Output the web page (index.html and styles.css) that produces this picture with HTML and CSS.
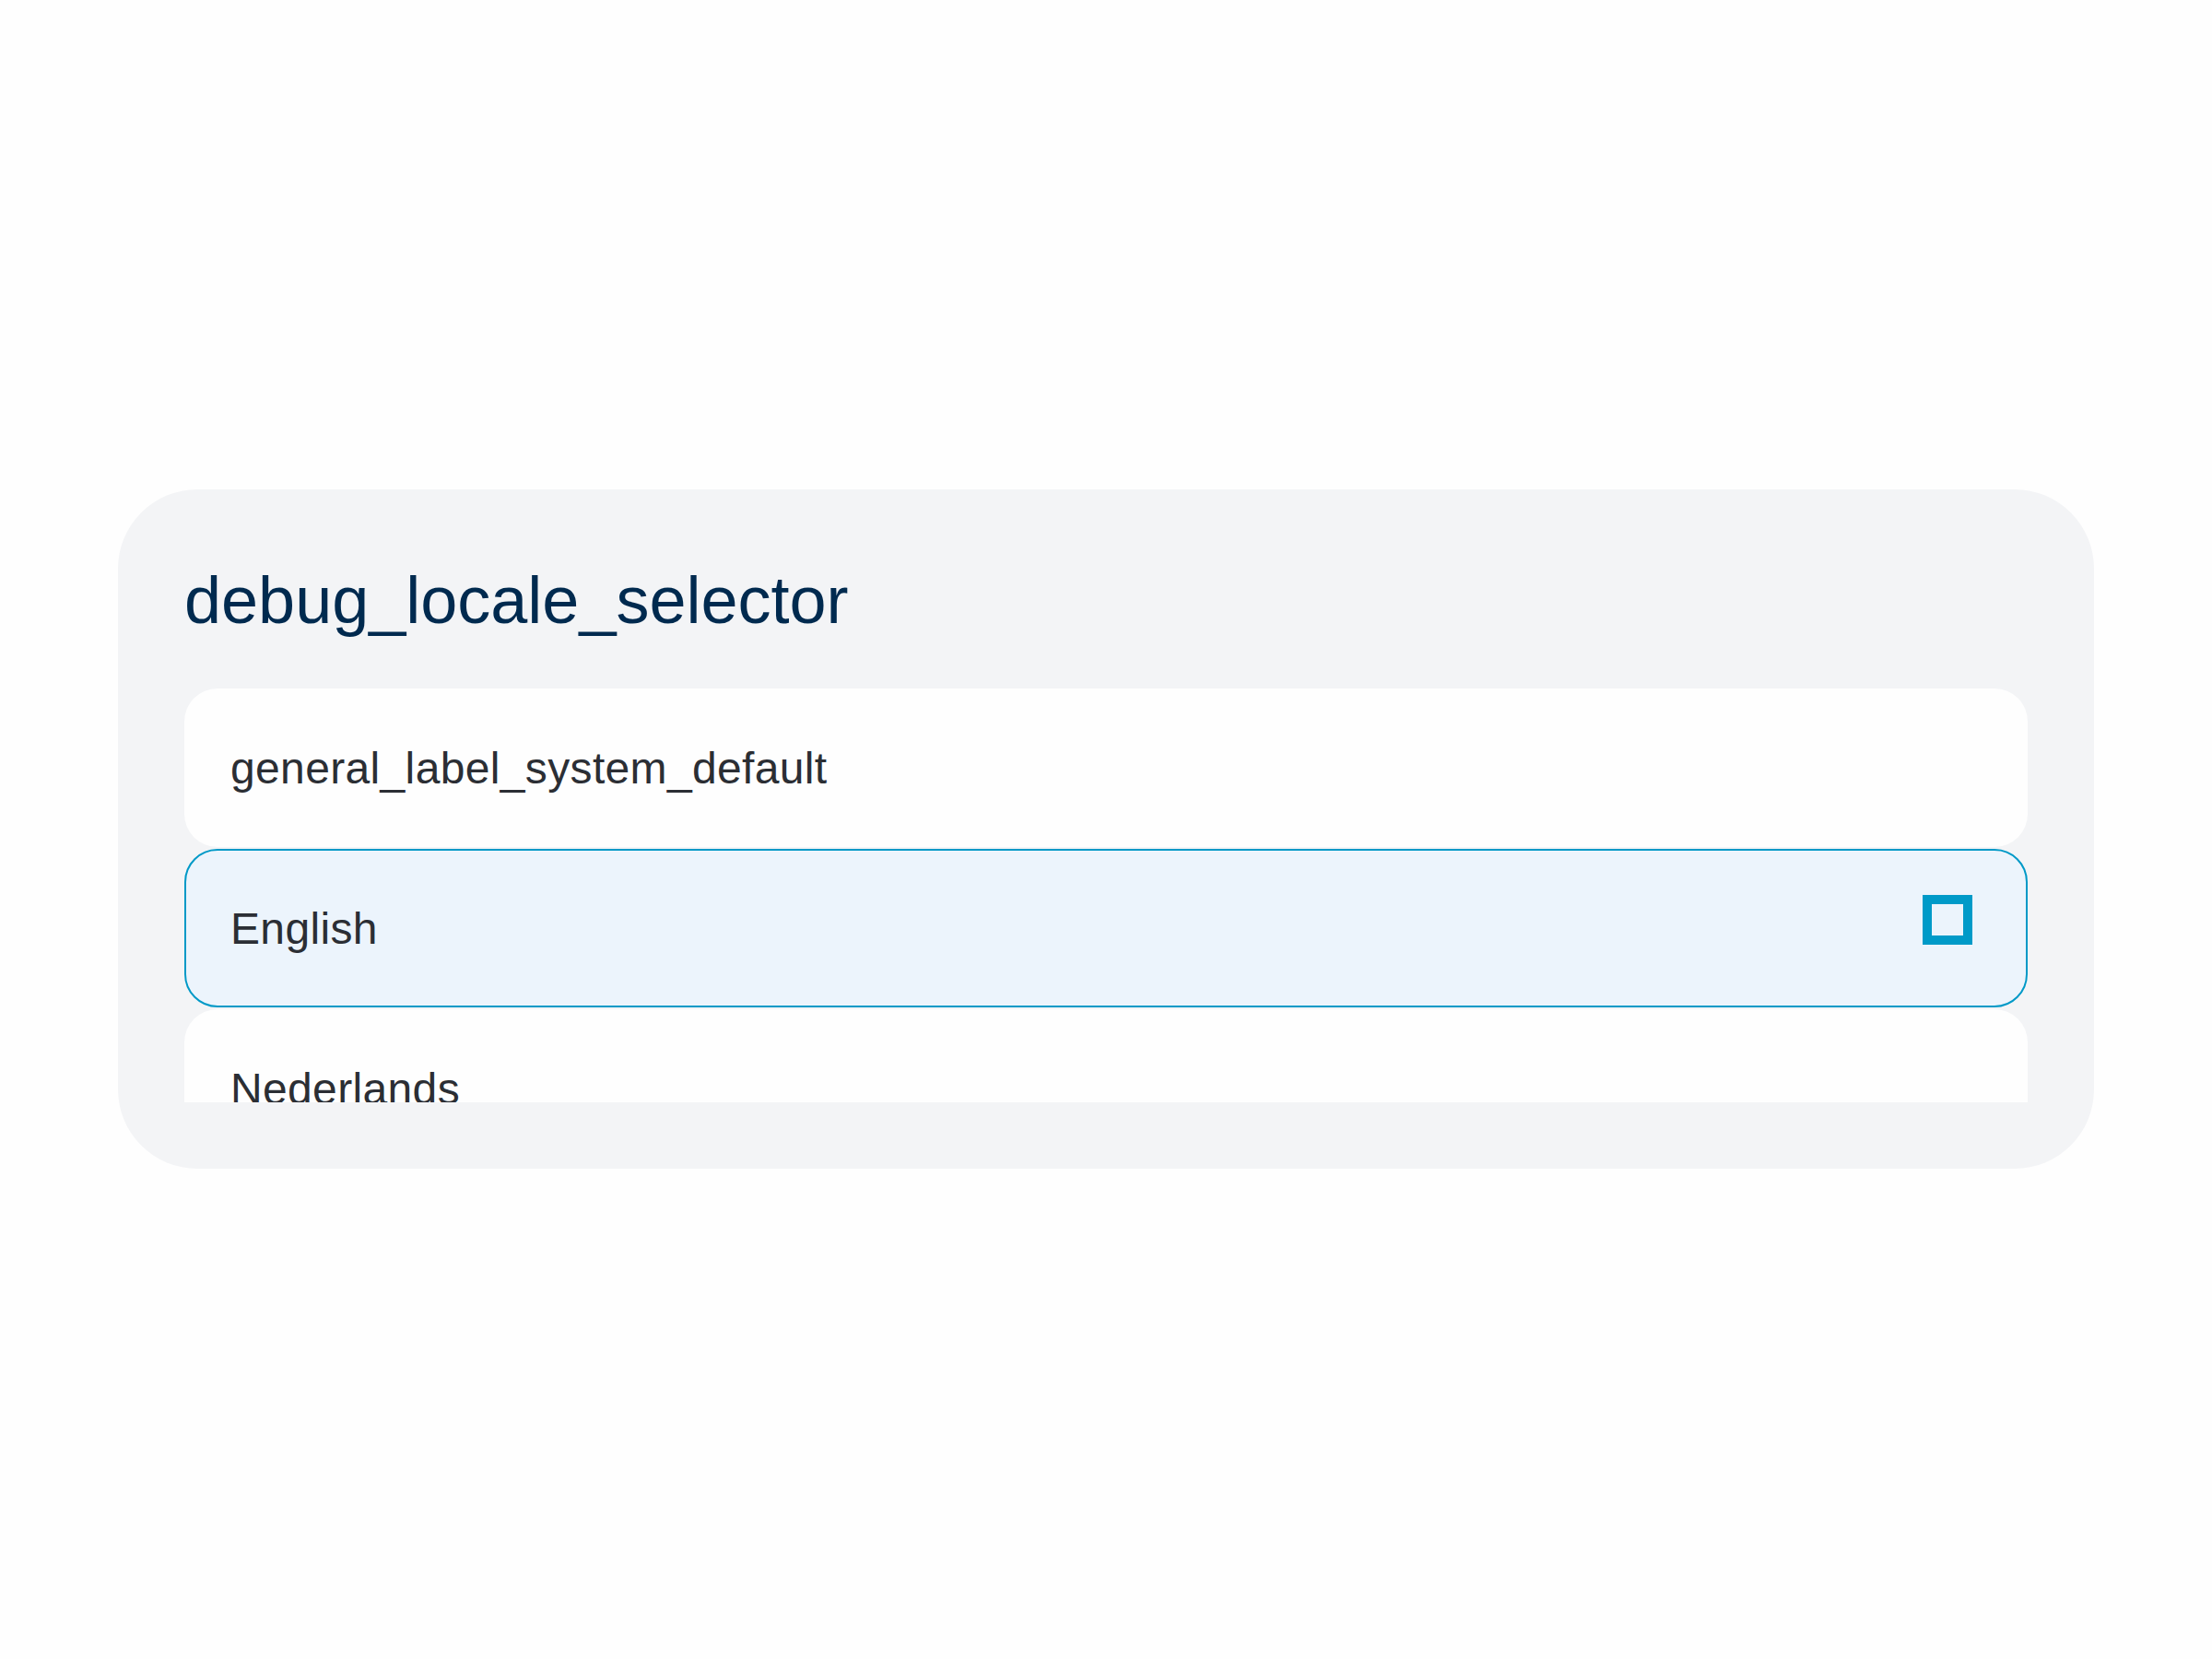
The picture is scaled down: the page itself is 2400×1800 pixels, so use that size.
FILE: index.html
```html
<!DOCTYPE html>
<html lang="en">
<head>
<meta charset="utf-8">
<title>debug_locale_selector</title>
<link rel="stylesheet" href="styles.css">
</head>
<body>
<main class="page">
  <section class="card">
    <h1 class="title">debug_locale_selector</h1>
    <div class="list">
      <div class="row"><span class="label">general_label_system_default</span></div>
      <div class="row selected"><span class="label">English</span><span class="check"></span></div>
      <div class="row"><span class="label">Nederlands</span></div>
    </div>
  </section>
</main>
</body>
</html>
```
FILE: styles.css
```css
html, body {
  margin: 0;
  padding: 0;
  background: #fefefe;
}
body {
  width: 2400px;
  height: 1800px;
  font-family: "Liberation Sans", Arial, sans-serif;
}
.page {
  padding: 531px 128px 0 128px;
}
.card {
  background: #f3f4f6;
  border-radius: 86px;
  padding: 72px;
  display: flex;
  flex-direction: column;
}
.title {
  margin: 0 0 48px 0;
  font-size: 72px;
  line-height: 96px;
  font-weight: 400;
  color: #002a4f;
}
.list {
  height: 449px;
  overflow: hidden;
  display: flex;
  flex-direction: column;
  gap: 2px;
}
.row {
  flex: 0 0 172px;
  box-sizing: border-box;
  background: #fefefe;
  border-radius: 36px;
  border: 2px solid transparent;
  padding: 0 58px 0 48px;
  display: flex;
  align-items: center;
  justify-content: space-between;
}
.row.selected {
  background: #ecf4fc;
  border-color: #0099c7;
}
.label {
  font-size: 48px;
  letter-spacing: 0.35px;
  color: #2b2e34;
}
.check {
  width: 54px;
  height: 54px;
  box-sizing: border-box;
  border: 10px solid #009ac8;
  margin-bottom: 18px;
}
```
